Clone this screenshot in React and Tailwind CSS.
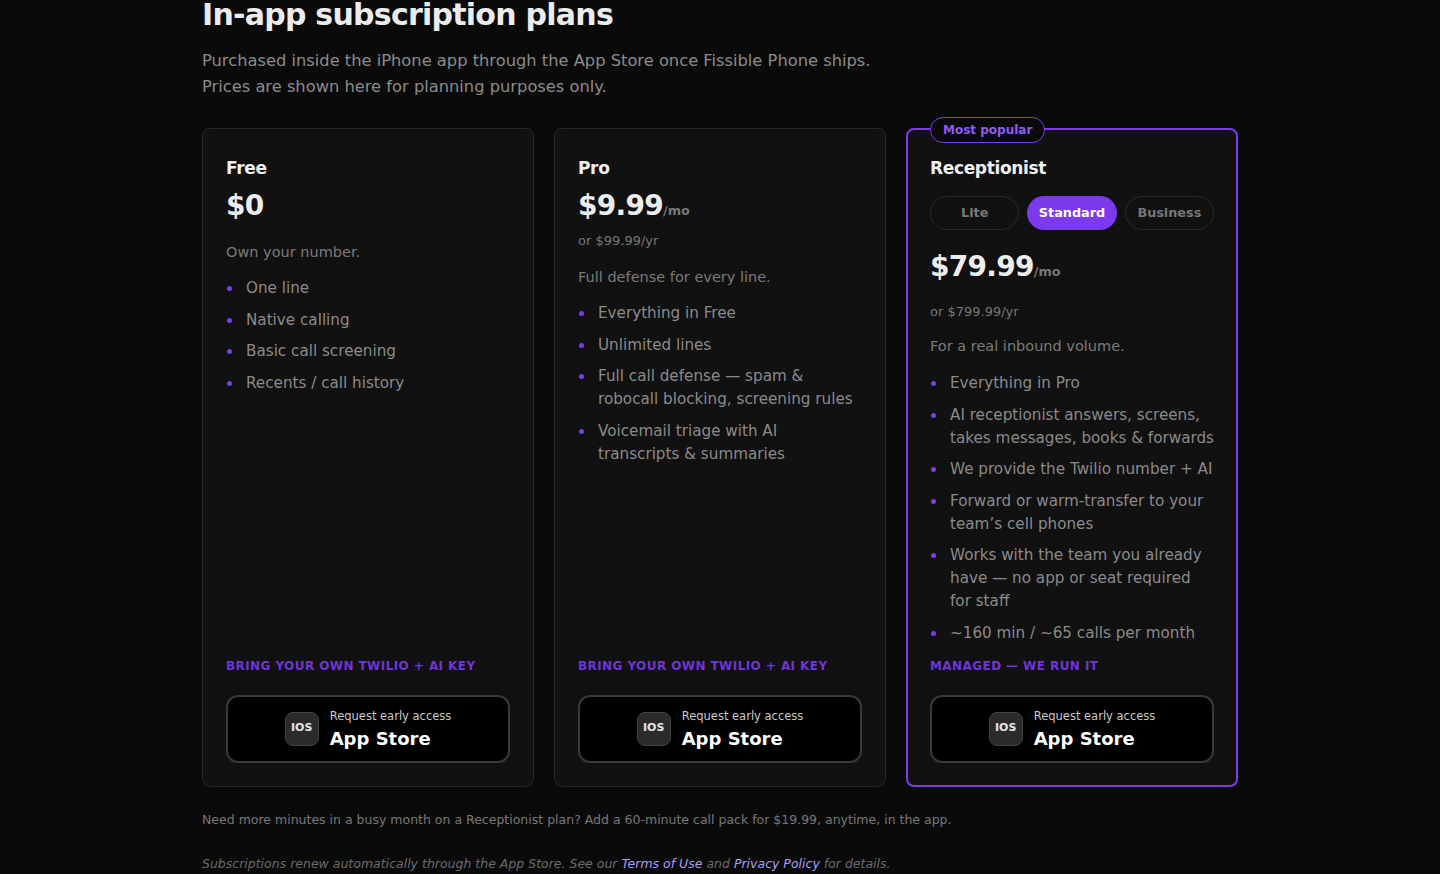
import React from "react";

const plans = [
  {
    name: "Free",
    price: "$0",
    per: "",
    yearly: "",
    blurb: "Own your number.",
    features: ["One line", "Native calling", "Basic call screening", "Recents / call history"],
    label: "Bring your own Twilio + AI key",
  },
  {
    name: "Pro",
    price: "$9.99",
    per: "/mo",
    yearly: "or $99.99/yr",
    blurb: "Full defense for every line.",
    features: [
      "Everything in Free",
      "Unlimited lines",
      "Full call defense — spam & robocall blocking, screening rules",
      "Voicemail triage with AI transcripts & summaries",
    ],
    label: "Bring your own Twilio + AI key",
  },
  {
    name: "Receptionist",
    popular: true,
    price: "$79.99",
    per: "/mo",
    yearly: "or $799.99/yr",
    blurb: "For a real inbound volume.",
    features: [
      "Everything in Pro",
      "AI receptionist answers, screens, takes messages, books & forwards",
      "We provide the Twilio number + AI",
      "Forward or warm-transfer to your team’s cell phones",
      "Works with the team you already have — no app or seat required for staff",
      "~160 min / ~65 calls per month",
    ],
    label: "Managed — we run it",
  },
];

function StoreButton() {
  return (
    <button className="flex h-[68px] w-full items-center justify-center gap-[11px] rounded-xl border-2 border-[#3a3a3a] bg-black">
      <span className="flex h-[34px] w-[34px] items-center justify-center rounded-lg border border-[#444] bg-[#2a2a2a] text-[11px] font-bold text-[#e5e5e5]">
        IOS
      </span>
      <span className="mt-1 flex flex-col items-start">
        <span className="text-[11.5px] leading-4 text-[#c8c8c8]">Request early access</span>
        <span className="text-[18px] font-bold leading-[30px] text-white">App Store</span>
      </span>
    </button>
  );
}

function Tiers() {
  const tiers = ["Lite", "Standard", "Business"];
  return (
    <div className="mt-[14px] grid grid-cols-3 gap-2">
      {tiers.map((t) => (
        <div
          key={t}
          className={
            t === "Standard"
              ? "flex h-[34px] items-center justify-center rounded-full bg-[#7c3aed] text-[12.8px] font-bold text-white"
              : "flex h-[34px] items-center justify-center rounded-full border border-[#2a2a2a] text-[12.8px] font-bold text-[#777]"
          }
        >
          {t}
        </div>
      ))}
    </div>
  );
}

function PlanCard({ plan }) {
  return (
    <div
      className={
        plan.popular
          ? "relative flex flex-col rounded-lg border-2 border-[#7c3aed] bg-[#111111] px-[22px] pt-[24px] pb-[22px]"
          : "relative flex flex-col rounded-lg border border-[#262626] bg-[#111111] px-[23px] pt-[25px] pb-[23px]"
      }
    >
      {plan.popular && (
        <span className="absolute -top-[13px] left-[22px] rounded-full border border-[#7c3aed] bg-[#0a0a0a] px-3 py-[4px] text-[12px] font-bold leading-4 text-[#8b5cf6]">
          Most popular
        </span>
      )}
      <h3 className="text-[17px] font-bold leading-7 tracking-[-0.02em] text-[#f0f0f0]">{plan.name}</h3>
      {plan.popular && <Tiers />}
      <div className={plan.popular ? "mt-[19px] flex items-baseline" : "mt-[6px] flex items-baseline"}>
        <span className="text-[28px] font-bold leading-9 tracking-tight text-[#ededed]">{plan.price}</span>
        {plan.per && <span className="text-[12.8px] font-bold text-[#777]">{plan.per}</span>}
      </div>
      {plan.yearly && (
        <p className={plan.popular ? "mt-[17px] text-[13px] leading-5 text-[#777]" : "mt-[7px] text-[13px] leading-5 text-[#777]"}>
          {plan.yearly}
        </p>
      )}
      <p
        className={
          plan.popular
            ? "mt-[12px] text-[14.5px] leading-6 text-[#7a7a7a]"
            : plan.yearly
            ? "mt-[14px] text-[14.5px] leading-6 text-[#7a7a7a]"
            : "mt-[16px] text-[14.5px] leading-6 text-[#7a7a7a]"
        }
      >
        {plan.blurb}
      </p>
      <ul className={plan.popular ? "mt-[14px] flex flex-col gap-[8.5px]" : "mt-[13px] flex flex-col gap-[8.5px]"}>
        {plan.features.map((f) => (
          <li key={f} className="flex gap-[14px] text-[15.2px] leading-[23px] text-[#8a8a8a]">
            <span className="ml-[1px] mt-[9px] h-[5px] w-[5px] shrink-0 rounded-full bg-[#7c3aed]" />
            <span>{f}</span>
          </li>
        ))}
      </ul>
      <div className="flex-1" />
      <p className="mt-[13px] text-[12px] font-bold uppercase leading-4 tracking-[0.035em] text-[#7035d8]">{plan.label}</p>
      <div className="mt-[21px]">
        <StoreButton />
      </div>
    </div>
  );
}

export default function App() {
  return (
    <main
      className="min-h-screen bg-[#0a0a0a] pb-10"
      style={{ fontFamily: "'DejaVu Sans', sans-serif" }}
    >
      <div className="mx-auto w-[1036px]">
        <h1 className="text-[30px] font-bold leading-none tracking-tight text-[#ececec]">In-app subscription plans</h1>
        <p className="mt-[18px] max-w-[700px] text-[16.3px] leading-[26px] text-[#8a8a8a]">
          Purchased inside the iPhone app through the App Store once Fissible Phone ships. Prices are shown here for
          planning purposes only.
        </p>
        <div className="mt-[28px] grid grid-cols-3 gap-5">
          {plans.map((p) => (
            <PlanCard key={p.name} plan={p} />
          ))}
        </div>
        <p className="mt-[23px] text-[12.5px] leading-5 text-[#777]">
          Need more minutes in a busy month on a Receptionist plan? Add a 60-minute call pack for $19.99, anytime, in
          the app.
        </p>
        <p className="mt-[24px] text-[12.5px] italic leading-5 text-[#6a6a6a]">
          Subscriptions renew automatically through the App Store. See our{" "}
          <a className="text-[#a99ff5]">Terms of Use</a> and <a className="text-[#a99ff5]">Privacy Policy</a> for
          details.
        </p>
      </div>
    </main>
  );
}
